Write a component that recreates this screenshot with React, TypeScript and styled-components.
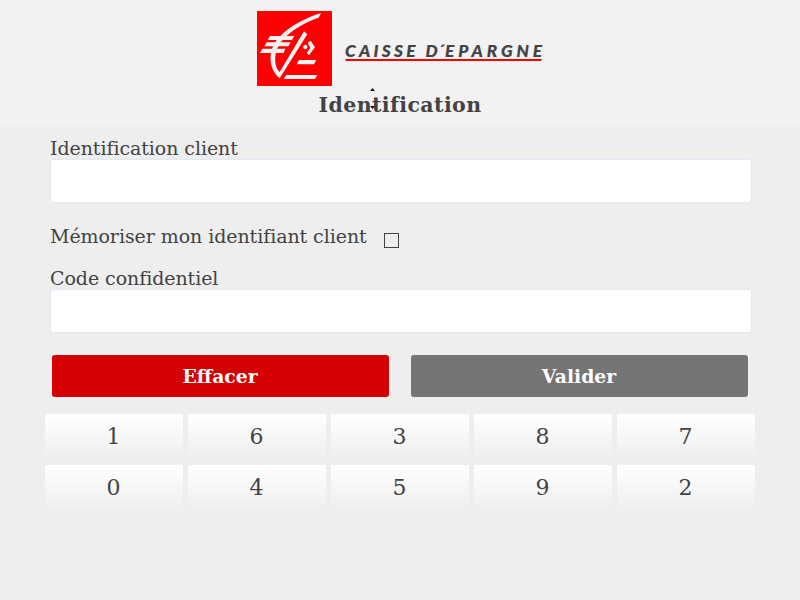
import React from "react";
import styled, { createGlobalStyle } from "styled-components";

const GlobalStyle = createGlobalStyle`
  *, *::before, *::after { box-sizing: border-box; }
  body {
    margin: 0;
    background: #eee;
    color: #434343;
    font-family: "DejaVu Serif", serif;
    font-variant-ligatures: none;
  }
`;

const Page = styled.div`
  display: flex;
  flex-direction: column;
  height: 600px;
  overflow: hidden;
`;

const Header = styled.header`
  display: flex;
  flex-direction: column;
  align-items: center;
  height: 127px;
  padding-top: 11px;
  background: #f2f2f2;
  border-bottom: 1px solid #f0f0f0;
`;

const Brand = styled.div`
  display: flex;
  gap: 12px;
  height: 75px;
  width: 286px;
`;

const Emblem = styled.svg`
  flex: none;
  width: 75px;
  height: 75px;
`;

const Wordmark = styled.svg`
  flex: none;
  width: 202px;
  height: 30px;
  margin-top: 25px;
`;

const Title = styled.h1`
  position: relative;
  margin: 7px 0 0;
  font-size: 20.5px;
  letter-spacing: 0.4px;
  line-height: 24px;
  font-weight: bold;
`;

const Marker = styled.svg`
  position: absolute;
  left: 50px;
  top: -6px;
  width: 7px;
  height: 23px;
`;

const Form = styled.form`
  padding: 10px 48px 0 50px;
`;

const Label = styled.label`
  display: block;
  height: 22px;
  font-size: 19px;
  letter-spacing: -0.07px;
  line-height: 22px;
`;

const Field = styled.input`
  display: block;
  width: 702px;
  height: 44px;
  padding: 0 10px;
  border: 1px solid #e0e8f3;
  border-radius: 3px;
  background: #fff;
  font: inherit;
  outline: none;
`;

const Remember = styled.div`
  display: flex;
  gap: 17px;
  height: 42px;
  margin-top: 22px;
`;

const Checkbox = styled.input`
  appearance: none;
  width: 15px;
  height: 15px;
  margin: 8px 0 0;
  border: 1px solid #434343;
`;

const Actions = styled.div`
  display: flex;
  gap: 22px;
  margin: 22px 0 0 2px;
`;

const Action = styled.button<{ $color: string }>`
  width: 337px;
  height: 42px;
  padding: 0 1px 1px 0;
  border: 0;
  border-radius: 3px;
  background: ${(p) => p.$color};
  color: #fff;
  font: bold 18.8px "DejaVu Serif", serif;
`;

const Keypad = styled.div`
  display: grid;
  grid-template-columns: repeat(5, 138px);
  grid-auto-rows: 46px;
  gap: 5px;
  margin: 17px 0 0 45px;
`;

const Key = styled.button`
  padding: 0 1px 2px 0;
  border: 0;
  background: linear-gradient(#fff, #eee);
  color: #434343;
  font: 22px "DejaVu Serif", serif;
`;

const digits = ["1", "6", "3", "8", "7", "0", "4", "5", "9", "2"];

export default function App() {
  return (
    <Page>
      <GlobalStyle />
      <Header>
        <Brand>
          <Emblem viewBox="21 18 225 225" aria-hidden="true">
            <rect x="21" y="18" width="225" height="225" fill="#fe0000" />
            <g fill="#f2f2f2">
              <path d="M213 24C170 37 118 64 91 93C55 127 50 187 89 220L172 88L162 79L89 201C70 184 70 136 98 105C122 76 166 51 206 38Z" />
              <path d="M60 93H133L126 105H53ZM50 112H122L115 124H43ZM37 131H106L101 144H30Z" />
              <path d="M147 165H199L192 178H140ZM109 210H202L195 222H101Z" />
              <path d="M173 114L182 107L195 127L177 151L170 143L181 129Z" />
              <circle cx="166" cy="126" r="6.5" />
            </g>
          </Emblem>
          <Wordmark viewBox="344 36 202 30">
            <g
              fill="#434343"
              stroke="#434343"
              strokeWidth="0.2"
              fontFamily="Lato, sans-serif"
              fontSize="17.2"
              fontWeight="900"
              fontStyle="italic"
            >
              <text x="345" y="57" textLength="70.5">CAISSE</text>
              <text x="425.5" y="57">D</text>
              <text x="437.5" y="57">´</text>
              <text x="445" y="57" textLength="97">EPARGNE</text>
            </g>
            <path d="M345 59H542L541 61H346Z" fill="#fe0000" />
          </Wordmark>
        </Brand>
        <Title>
          Identification
          <Marker viewBox="0 0 7 23">
            <path d="M1 4L3.5 1L6 4ZM1 19L3.5 22L6 19Z" fill="#111" />
          </Marker>
        </Title>
      </Header>
      <Form onSubmit={(e) => e.preventDefault()}>
        <Label htmlFor="client">Identification client</Label>
        <Field id="client" />
        <Remember>
          <Label htmlFor="remember">Mémoriser mon identifiant client</Label>
          <Checkbox id="remember" type="checkbox" />
        </Remember>
        <Label htmlFor="code">Code confidentiel</Label>
        <Field id="code" type="password" />
        <Actions>
          <Action type="button" $color="#d60003">Effacer</Action>
          <Action type="submit" $color="#757575">Valider</Action>
        </Actions>
      </Form>
      <Keypad>
        {digits.map((d) => (
          <Key key={d} type="button">{d}</Key>
        ))}
      </Keypad>
    </Page>
  );
}
